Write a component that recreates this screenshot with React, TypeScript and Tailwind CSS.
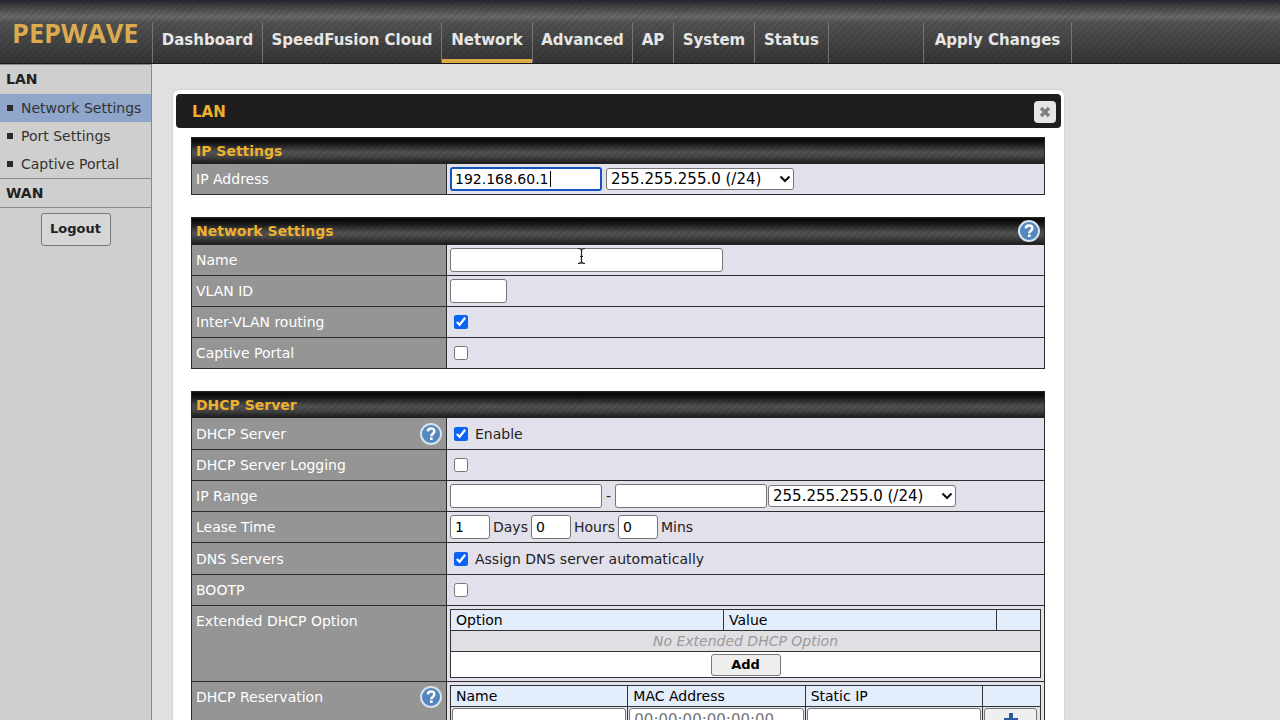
import { useState } from "react";
import type { ReactNode } from "react";

const stripes =
  "bg-[repeating-linear-gradient(135deg,rgba(0,0,0,0.12)_0px,rgba(0,0,0,0.12)_1px,transparent_3px,transparent_5px),linear-gradient(to_bottom,#000000_0%,#1c1c1c_22%,#545454_55%,#484848_72%,#1c1c1c_100%)]";

const fieldStyle =
  "h-6 rounded-[3px] border border-[#767676] bg-white px-1 text-sm text-black outline-none";

const navItems = [
  { name: "Dashboard", width: "w-[110px]" },
  { name: "SpeedFusion Cloud", width: "w-[179px]" },
  { name: "Network", width: "w-[91px]" },
  { name: "Advanced", width: "w-[100px]" },
  { name: "AP", width: "w-[41px]" },
  { name: "System", width: "w-[81px]" },
  { name: "Status", width: "w-[74px]" },
];

const lanItems = ["Network Settings", "Port Settings", "Captive Portal"];

const HelpButton = ({ label }: { label: string }) => (
  <button
    type="button"
    aria-label={label}
    className="flex h-[22px] w-[22px] shrink-0 items-center justify-center rounded-full border-2 border-[#d5e3f1] bg-[#5487bd]"
  >
    <svg viewBox="0 0 18 18" className="h-[18px] w-[18px]" fill="none">
      <path
        d="M5.8 6.4C5.9 4.5 7.2 3.6 9.1 3.6c1.9 0 3.2 1 3.2 2.6 0 1.3-.7 2-1.6 2.7-.9.7-1.4 1.1-1.4 2.4"
        stroke="#fff"
        strokeWidth="2.5"
      />
      <rect x="8" y="12.4" width="2.6" height="2.6" fill="#fff" />
    </svg>
  </button>
);

const MaskSelect = ({ label }: { label: string }) => (
  <span className="relative inline-flex">
    <select
      aria-label={label}
      className="h-[22px] w-[188px] appearance-none rounded-[3px] border border-[#767676] bg-white pl-1 text-[15px] leading-5 text-black"
    >
      <option>255.255.255.0 (/24)</option>
      <option>255.255.0.0 (/16)</option>
    </select>
    <svg
      viewBox="0 0 12 8"
      className="pointer-events-none absolute right-[3px] top-[7px] h-2 w-3"
      fill="none"
    >
      <path d="M1.5 1.5 6 6l4.5-4.5" stroke="#111" strokeWidth="2.2" />
    </svg>
  </span>
);

const Check = ({
  id,
  checked,
  children,
}: {
  id: string;
  checked?: boolean;
  children?: ReactNode;
}) => (
  <div className="flex items-center gap-[7px] pl-1">
    <input
      id={id}
      type="checkbox"
      defaultChecked={checked}
      className="h-[14px] w-[14px] accent-[#0b63f3]"
    />
    {children && (
      <label htmlFor={id} className="text-[#222]">
        {children}
      </label>
    )}
  </div>
);

const Section = ({
  title,
  help,
  children,
}: {
  title: string;
  help?: boolean;
  children: ReactNode;
}) => (
  <table className="w-full table-fixed border-collapse border border-[#333]">
    <colgroup>
      <col className="w-[255px]" />
      <col />
    </colgroup>
    <thead>
      <tr>
        <th
          colSpan={2}
          className={`border border-[#222] py-0 pl-1 pr-1 text-left text-sm font-bold text-[#eeb02f] ${
            help ? "h-[27px]" : "h-[26px]"
          } ${stripes}`}
        >
          <div className="flex items-center justify-between">
            {title}
            {help && <HelpButton label={`${title} help`} />}
          </div>
        </th>
      </tr>
    </thead>
    <tbody>{children}</tbody>
  </table>
);

const Row = ({
  label,
  htmlFor,
  help,
  top,
  height = "h-[31px]",
  children,
}: {
  label: string;
  htmlFor?: string;
  help?: boolean;
  top?: boolean;
  height?: string;
  children: ReactNode;
}) => (
  <tr className={height}>
    <th
      scope="row"
      className={`border border-[#2c2c2c] bg-[#959595] px-1 text-left font-normal text-white ${
        top ? "pt-1 align-top" : "py-0"
      }`}
    >
      <div className="flex min-h-[22px] items-center justify-between">
        <label htmlFor={htmlFor}>{label}</label>
        {help && <HelpButton label={`${label} help`} />}
      </div>
    </th>
    <td
      className={`border border-[#2c2c2c] bg-[#e2e0ea] px-[3px] ${top ? "py-[3px]" : "py-0"}`}
    >
      {children}
    </td>
  </tr>
);

const TextCursor = () => (
  <svg
    viewBox="0 0 9 18"
    className="pointer-events-none absolute left-[127px] top-[-1px] h-[18px] w-[9px]"
    fill="none"
  >
    <path
      d="M1 1.5c2 0 3.5.4 3.5 2v11c0 1.6-1.5 2-3.5 2M8 1.5c-2 0-3.5.4-3.5 2M8 16.5c-2 0-3.5-.4-3.5-2M3 9.5h3"
      stroke="#222"
      strokeWidth="1.2"
    />
  </svg>
);

const headCell =
  "h-[21px] border border-[#333] bg-[#e3edfb] px-[5px] py-0 text-left font-normal text-black";

const App = () => {
  const [page, setPage] = useState("Network Settings");

  return (
    <div className="flex h-screen flex-col overflow-hidden bg-[#e0e0e0] font-['DejaVu_Sans',Verdana,sans-serif] text-sm text-[#222]">
      {/* Top bar */}
      <header className="flex h-16 shrink-0 border-b border-t-2 border-b-[#1a1a1a] border-t-[#262733] bg-[repeating-linear-gradient(135deg,rgba(0,0,0,0.09)_0px,rgba(0,0,0,0.09)_1px,transparent_3px,transparent_5px),linear-gradient(to_bottom,#303030_0%,#6a6a6a_24%,#525252_34%,#353535_100%)]">
        <a
          href="#home"
          className="w-[152px] shrink-0 pl-3 pt-[13px] font-['Open_Sans',sans-serif] text-[27px] font-bold leading-9 text-[#dcab50]"
        >
          PEPWAVE
        </a>
        <nav className="flex pt-5">
          {navItems.map(({ name, width }) => (
            <a
              key={name}
              href={`#${name}`}
              className={`flex h-full justify-center whitespace-nowrap border-l border-[#747474] pt-2 text-[15px] font-bold leading-5 text-[#e6e6e6] ${width} ${
                name === "Network" ? "shadow-[inset_0_-4px_0_#dfaa45]" : ""
              }`}
            >
              {name}
            </a>
          ))}
          <span className="w-[95px] border-l border-[#747474]" />
          <a
            href="#apply"
            className="flex w-[149px] justify-center whitespace-nowrap border-x border-[#747474] pt-2 text-[15px] font-bold leading-5 text-[#e6e6e6]"
          >
            Apply Changes
          </a>
        </nav>
      </header>

      <div className="flex min-h-0 flex-1">
        {/* Sidebar */}
        <aside className="w-[152px] shrink-0 border-r border-t border-[#8a8a8a] bg-[#cfcfcf]">
          <h2 className="h-[29px] pl-[6px] font-bold leading-[29px] text-[#222]">LAN</h2>
          <ul>
            {lanItems.map((item) => (
              <li key={item}>
                <a
                  href="#lan"
                  onClick={() => setPage(item)}
                  className={`flex h-7 items-center gap-2 whitespace-nowrap pl-[7px] text-[#333] ${
                    page === item ? "bg-[#8fa5ca]" : ""
                  }`}
                >
                  <span className="h-[6px] w-[6px] bg-[#2a2a2a]" />
                  {item}
                </a>
              </li>
            ))}
          </ul>
          <h2 className="h-[30px] border-y border-[#8a8a8a] pl-[6px] font-bold leading-7 text-[#222]">
            WAN
          </h2>
          <div className="flex justify-center pt-[5px]">
            <button
              type="button"
              className="h-[33px] w-[70px] rounded-[3px] border border-[#777] bg-[#d6d6d6] text-[13px] font-bold text-[#222]"
            >
              Logout
            </button>
          </div>
        </aside>

        <main className="min-w-0 flex-1 pl-[21px] pt-[26px]">
          <div className="max-w-[891px] rounded-md bg-white px-[3px] pb-4 pt-1 shadow-[0_0_2px_#bbb]">
            <div className="flex h-[34px] items-center justify-between rounded bg-[#1e1e1e] pl-4 pr-[5px] pt-0.5">
              <h1 className="text-[15px] font-bold leading-5 text-[#eeb02f]">LAN</h1>
              <button
                type="button"
                aria-label="Close"
                className="flex h-[22px] w-[22px] items-center justify-center rounded bg-[#e6e6e6]"
              >
                <svg viewBox="0 0 12 12" className="h-3 w-3">
                  <path d="m2 2 8 8M10 2l-8 8" stroke="#808080" strokeWidth="3.4" />
                </svg>
              </button>
            </div>

            <div className="flex flex-col gap-[22px] pl-[15px] pr-4 pt-[9px]">
              <Section title="IP Settings">
                <Row label="IP Address" htmlFor="ip">
                  <div className="flex items-center gap-1">
                    <span className="relative inline-flex">
                      <input
                        id="ip"
                        defaultValue="192.168.60.1"
                        className="h-6 w-[152px] rounded-[3px] border-2 border-[#1554c0] bg-white px-[3px] text-sm text-black caret-transparent outline-none"
                      />
                      <span className="absolute left-[100px] top-1 h-4 w-px bg-black" />
                    </span>
                    <MaskSelect label="Subnet mask" />
                  </div>
                </Row>
              </Section>

              <Section title="Network Settings" help>
                <Row label="Name" htmlFor="name">
                  <div className="relative flex">
                    <input id="name" className={`w-[273px] ${fieldStyle}`} />
                    <TextCursor />
                  </div>
                </Row>
                <Row label="VLAN ID" htmlFor="vlan">
                  <input id="vlan" className={`block w-[57px] ${fieldStyle}`} />
                </Row>
                <Row label="Inter-VLAN routing" htmlFor="routing">
                  <Check id="routing" checked />
                </Row>
                <Row label="Captive Portal" htmlFor="portal">
                  <Check id="portal" />
                </Row>
              </Section>

              <Section title="DHCP Server">
                <Row label="DHCP Server" htmlFor="dhcp" help height="h-8">
                  <Check id="dhcp" checked>
                    Enable
                  </Check>
                </Row>
                <Row label="DHCP Server Logging" htmlFor="logging">
                  <Check id="logging" />
                </Row>
                <Row label="IP Range" htmlFor="range-start">
                  <div className="flex items-center">
                    <input id="range-start" className={`w-[152px] ${fieldStyle}`} />
                    <span className="w-[13px] text-center">-</span>
                    <input aria-label="Range end" className={`mr-px w-[152px] ${fieldStyle}`} />
                    <MaskSelect label="Range mask" />
                  </div>
                </Row>
                <Row label="Lease Time" htmlFor="days">
                  <div className="flex items-center gap-[3px]">
                    <input id="days" defaultValue="1" className={`w-10 ${fieldStyle}`} />
                    <label htmlFor="days">Days</label>
                    <input id="hours" defaultValue="0" className={`w-10 ${fieldStyle}`} />
                    <label htmlFor="hours">Hours</label>
                    <input id="mins" defaultValue="0" className={`w-10 ${fieldStyle}`} />
                    <label htmlFor="mins">Mins</label>
                  </div>
                </Row>
                <Row label="DNS Servers" htmlFor="dns" height="h-8">
                  <Check id="dns" checked>
                    Assign DNS server automatically
                  </Check>
                </Row>
                <Row label="BOOTP" htmlFor="bootp">
                  <Check id="bootp" />
                </Row>
                <Row label="Extended DHCP Option" top>
                  <table className="w-full table-fixed border-collapse bg-white">
                    <colgroup>
                      <col />
                      <col />
                      <col className="w-11" />
                    </colgroup>
                    <thead>
                      <tr>
                        <th className={headCell}>Option</th>
                        <th className={headCell}>Value</th>
                        <th className={headCell} />
                      </tr>
                    </thead>
                    <tbody>
                      <tr>
                        <td
                          colSpan={3}
                          className="h-[21px] border border-[#333] bg-[#e0dfe3] py-0 text-center italic text-[#9a9a9a]"
                        >
                          No Extended DHCP Option
                        </td>
                      </tr>
                      <tr>
                        <td colSpan={3} className="h-[26px] border border-[#333] p-0 text-center">
                          <button
                            type="button"
                            className="mx-auto block h-[22px] w-[70px] rounded-[3px] border border-[#777] bg-[#efefef] text-[13px] font-bold leading-5 text-black"
                          >
                            Add
                          </button>
                        </td>
                      </tr>
                    </tbody>
                  </table>
                </Row>
                <Row label="DHCP Reservation" help top>
                  <table className="w-full table-fixed border-collapse">
                    <colgroup>
                      <col />
                      <col />
                      <col />
                      <col className="w-[58px]" />
                    </colgroup>
                    <thead>
                      <tr>
                        <th className={headCell}>Name</th>
                        <th className={headCell}>MAC Address</th>
                        <th className={headCell}>Static IP</th>
                        <th className={headCell} />
                      </tr>
                    </thead>
                    <tbody>
                      <tr>
                        <td className="border border-[#333] p-px">
                          <input
                            aria-label="Reservation name"
                            className={`block w-full ${fieldStyle}`}
                          />
                        </td>
                        <td className="border border-[#333] p-px">
                          <input
                            aria-label="MAC address"
                            placeholder="00:00:00:00:00:00"
                            className={`block w-full placeholder:text-[15px] placeholder:text-[#757575] ${fieldStyle}`}
                          />
                        </td>
                        <td className="border border-[#333] p-px">
                          <input aria-label="Static IP" className={`block w-full ${fieldStyle}`} />
                        </td>
                        <td className="border border-[#333] p-px pr-[3px]">
                          <button
                            type="button"
                            aria-label="Add reservation"
                            className="flex h-6 w-full items-center justify-center rounded-[3px] border border-[#777] bg-[#efefef]"
                          >
                            <svg viewBox="0 0 14 14" className="h-[14px] w-[14px]">
                              <path d="M7 0v14M0 7h14" stroke="#2f5aa0" strokeWidth="4" />
                            </svg>
                          </button>
                        </td>
                      </tr>
                    </tbody>
                  </table>
                </Row>
              </Section>
            </div>
          </div>
        </main>
      </div>
    </div>
  );
};

export default App;
